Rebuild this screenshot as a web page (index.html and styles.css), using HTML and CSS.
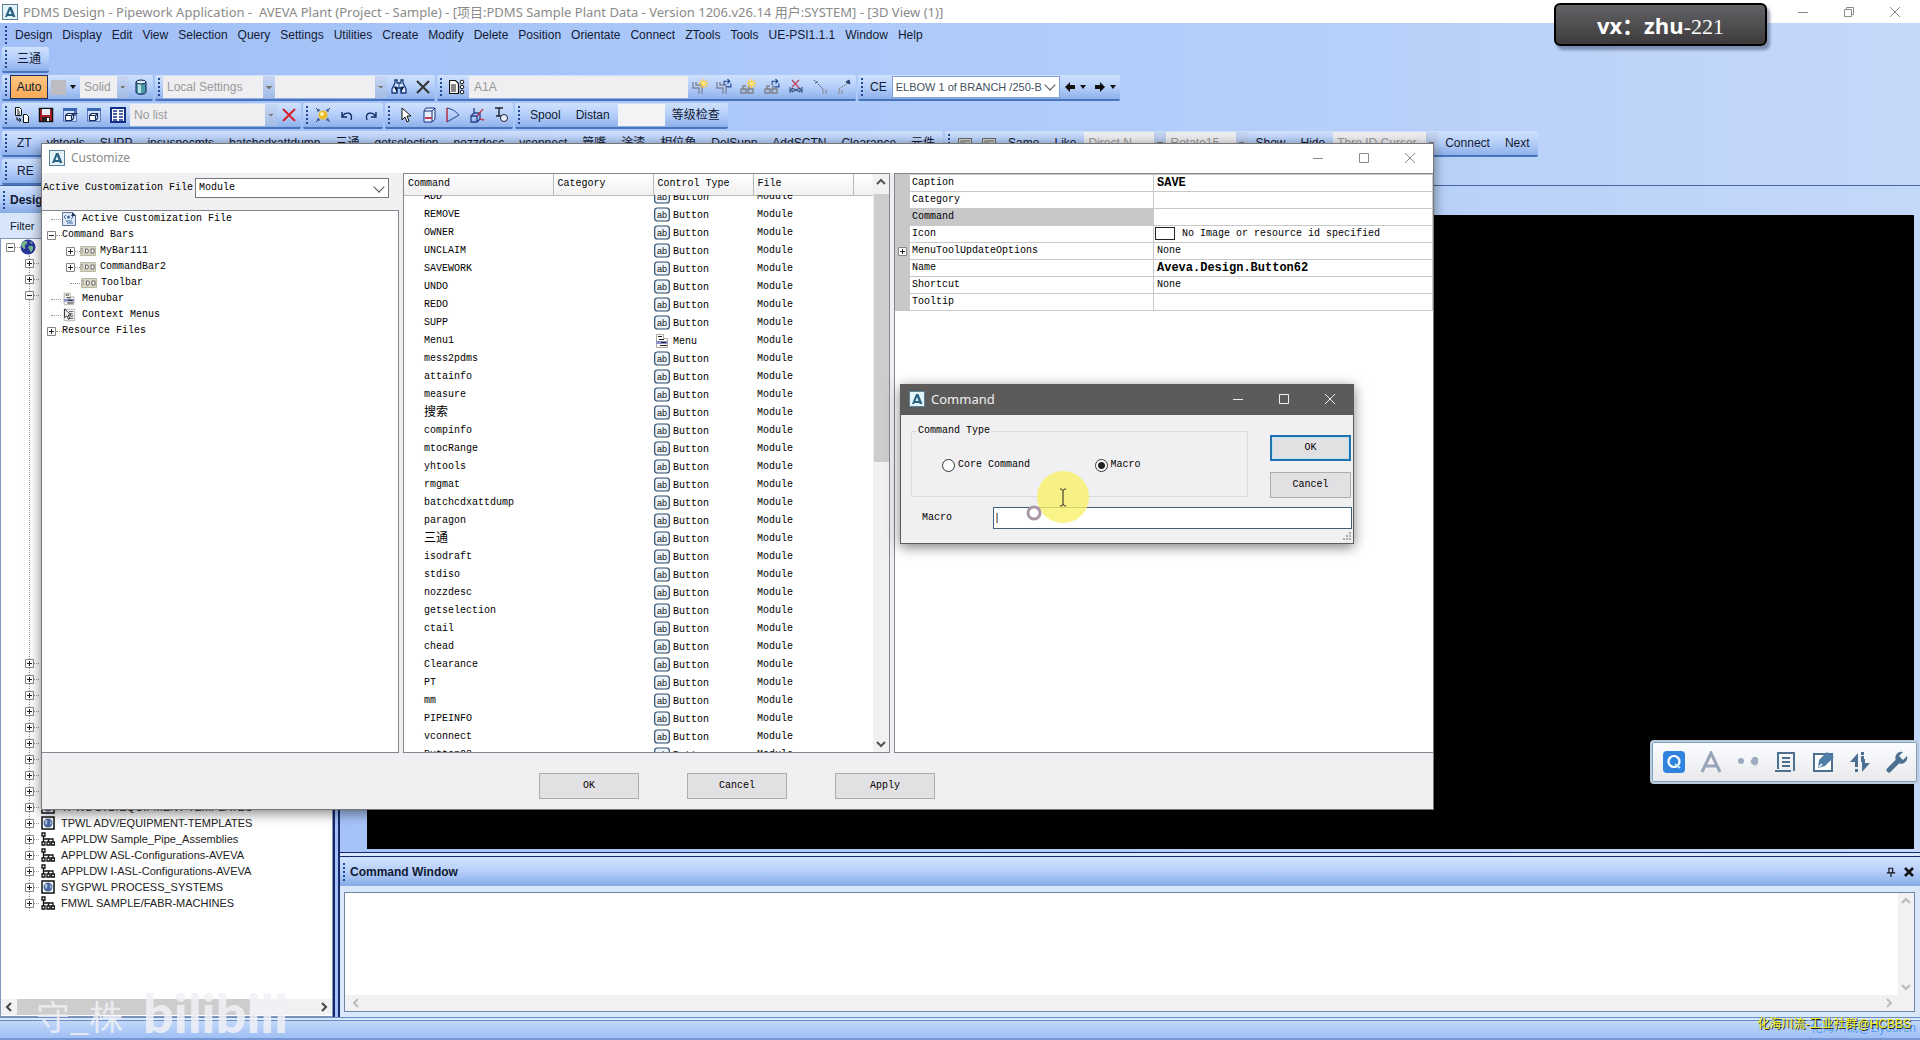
FILE: index.html
```html
<!DOCTYPE html>
<html lang="zh-CN">
<head>
<meta charset="utf-8">
<title>PDMS Design - Pipework Application</title>
<link rel="stylesheet" href="styles.css">
</head>
<body>
<svg class="sprite" aria-hidden="true">
  <symbol id="logo" viewBox="0 0 16 16"><rect x=".5" y=".5" width="15" height="15" fill="#e4f3fa" stroke="#5c8299"/><path d="M3 13 7 3h2.500l4 10h-2.800L8 6l-1.500 4h3l1 2H5.500L5 13z" fill="#2b6480"/></symbol>
  <symbol id="min" viewBox="0 0 12 12"><path d="M1 6.500h10" stroke="currentColor"/></symbol>
  <symbol id="max" viewBox="0 0 12 12"><path d="M1.500 1.500h9v9h-9z" fill="none" stroke="currentColor"/></symbol>
  <symbol id="restore" viewBox="0 0 12 12"><path d="M1.500 3.500h7v7h-7zM3.500 3.500v-2h7v7h-2" fill="none" stroke="currentColor"/></symbol>
  <symbol id="close" viewBox="0 0 12 12"><path d="m1 1 10 10M11 1 1 11" stroke="currentColor"/></symbol>
  <symbol id="plus" viewBox="0 0 9 9"><path d="M.5.5h8v8h-8z" fill="#fff" stroke="#868686"/><path d="M2 4.500h5M4.500 2v5" stroke="#222"/></symbol>
  <symbol id="minus" viewBox="0 0 9 9"><path d="M.5.5h8v8h-8z" fill="#fff" stroke="#868686"/><path d="M2 4.500h5" stroke="#222"/></symbol>
  <symbol id="globe" viewBox="0 0 16 16"><circle cx="8" cy="8" r="7.500" fill="#27359b"/><path d="M3 3c3-2 5-1 4 1S4 6 5 8s-1 3-3 0 0-4 1-5zM9 7c3-1 5 0 4 3s-3 4-3 2-3-3-1-5zM10 2l3 2-2 1z" fill="#78b88a"/></symbol>
  <symbol id="world" viewBox="0 0 14 14"><path d="M1 1h12v12H1z" fill="#fff" stroke="#111" stroke-width="1.500"/><circle cx="7" cy="7" r="4.500" fill="#4a679e"/><path d="M4 4c3-1 3 2 2 4S3 7 4 4zM9 4l2 3-2 2z" fill="#9fb9d9"/></symbol>
  <symbol id="hier" viewBox="0 0 14 14"><path d="M1 1h3v3H1zM1 10h3v3H1zM6 10h3v3H6zM10.500 10h3v3h-3zM2.500 4v6M2.500 7h9.500v3M7.500 7v3" fill="none" stroke="#111" stroke-width="1.300"/></symbol>
  <symbol id="ab" viewBox="0 0 16 16"><rect x=".7" y="1" width="14.600" height="13" rx="2.500" fill="#eef4f9" stroke="#2d4a68" stroke-width="1.200"/><text x="8" y="11" text-anchor="middle" class="ab-text">ab</text></symbol>
  <symbol id="menu" viewBox="0 0 14 16"><path d="M1.500 1.500h7v4h4v9h-11z" fill="#fff" stroke="#b2a89a"/><path d="M1 8h12v3H1z" fill="#8c93c4"/><path d="M3 3.500h4M4 6.500h5M6 9.500h5M5 12.500h7" stroke="#222" stroke-width="1.200"/></symbol>
  <symbol id="ctx" viewBox="0 0 14 16"><path d="M1.500 1.500h12v13h-12z" fill="#fff" stroke="#aaa"/><path d="M7 4h5M7 6h4M8 8h4M8 10h4M7 12h5" stroke="#555"/><path d="M2 1v10l2.500-2 2 4 1.500-1-2-4h3z" fill="#fff" stroke="#111"/></symbol>
  <symbol id="bar" viewBox="0 0 16 10"><path d="M.5.500h15v9H.5z" fill="#d9d6c6" stroke="#bab6a2"/><path d="M5.500 3v4h2l1-2-1-2zM11 3h3v4h-3z" fill="#fff" stroke="#666"/><path d="M2 2v6" stroke="#666" stroke-dasharray="1 1"/></symbol>
  <symbol id="file" viewBox="0 0 14 14"><path d="M.5.500h10l3 3v10H.5z" fill="#dfe9f7" stroke="#5d7399"/><path d="m4 3-2 2 2 2m5-4 2 2-2 2M4 9h6M5 11h6" stroke="#41669f" fill="none"/><circle cx="6.500" cy="5" r="1.500" fill="#41669f"/><path d="M10 0v4h4z" fill="#27365c"/></symbol>
  <symbol id="cyl" viewBox="0 0 16 16"><path d="M3 3v10c0 3 10 3 10 0V3" fill="#4a9aa6" stroke="#0c1a50"/><path d="M5 5v9h3V5z" fill="#b4e4e6"/><ellipse cx="8" cy="3" rx="5" ry="2" fill="#d8f0f0" stroke="#0c1a50"/></symbol>
  <symbol id="bino" viewBox="0 0 16 16"><path d="M4 1h2v3h4V1h2v3l3 6v4h-5V9H6v5H1v-4l3-6z" fill="#dce8ff" stroke="#173a7d" stroke-width="1.300"/><path d="M3 8h3v5M13 8h-3v5M8 4v5" stroke="#173a7d"/></symbol>
  <symbol id="x" viewBox="0 0 16 16"><path d="m2 2 12 12M14 2 2 14" stroke="currentColor" stroke-width="2"/></symbol>
  <symbol id="xbold" viewBox="0 0 10 10"><path d="m1 1 8 8M9 1 1 9" stroke="currentColor" stroke-width="2.500"/></symbol>
  <symbol id="spec" viewBox="0 0 16 16"><path d="M.5 1.500h6l3 3v10h-9z" fill="#fff" stroke="#111" stroke-width="1.200"/><path d="M2 6h5M2 8h5M2 10h5M2 12h5" stroke="#111"/><circle cx="13" cy="3" r="1.800" fill="#fff" stroke="#111"/><circle cx="13" cy="8" r="1.800" fill="#fff" stroke="#111"/><circle cx="13" cy="13" r="1.800" fill="#fff" stroke="#111"/></symbol>
  <symbol id="star" viewBox="0 0 8 8"><path d="M4 0v8M0 4h8M1 1l6 6M7 1 1 7" stroke="#ffcf3f" stroke-width="1.200"/><circle cx="4" cy="4" r="1.500" fill="#ffe98b"/></symbol>
  <symbol id="cyc" viewBox="0 0 8 8"><path d="M1 5V2h5M4 0l2 2-2 2M7 4v3H3" fill="none" stroke="#23458d"/></symbol>
  <symbol id="pipe" viewBox="0 0 16 16"><path d="M1 3v6h6v6M4 3v3h6v9" fill="none" stroke="#7f8597" stroke-width="1.300"/></symbol>
  <symbol id="pipe-new" viewBox="0 0 16 16"><use href="#pipe"/><use href="#star" x="7" width="9" height="9"/></symbol>
  <symbol id="pipe-mod" viewBox="0 0 16 16"><use href="#pipe"/><use href="#cyc" x="7" width="9" height="9"/></symbol>
  <symbol id="comp" viewBox="0 0 16 16"><path d="M1 10h5v4H1zM8 10h5v4H8zM3 10V7h3M9 10V6" fill="none" stroke="#7f8086" stroke-width="1.400"/></symbol>
  <symbol id="comp-new" viewBox="0 0 16 16"><use href="#comp"/><use href="#star" x="7" width="9" height="9"/></symbol>
  <symbol id="comp-mod" viewBox="0 0 16 16"><use href="#comp"/><use href="#cyc" x="7" width="9" height="9"/></symbol>
  <symbol id="comp-del" viewBox="0 0 16 16"><path d="M2 8v6M14 8v6M2 11h2M12 11h2M4 9v4l8-4v4z" fill="none" stroke="#24406f"/><path d="m4 1 7 8M11 1 4 8" stroke="#c24357" stroke-width="1.300"/></symbol>
  <symbol id="conn" viewBox="0 0 16 16"><path d="M2 1l3 3M5 2v2H3M6 5l5 5" stroke="#3c5684" fill="none" stroke-dasharray="2 1"/><path d="M11 10v5M14 10v5" stroke="#888"/></symbol>
  <symbol id="node" viewBox="0 0 16 16"><path d="m12 4-9 6" stroke="#777" stroke-dasharray="2 1"/><path d="M10 3l3-2 1 4z" fill="#24406f" stroke="#24406f"/><path d="M3 10v5M6 11v4" stroke="#888"/></symbol>
  <symbol id="left" viewBox="0 0 12 12"><path d="M1 6l5-5v3h5v4H6v3z" fill="#111"/></symbol>
  <symbol id="right" viewBox="0 0 12 12"><path d="m11 6-5-5v3H1v4h5v3z" fill="#111"/></symbol>
  <symbol id="docs" viewBox="0 0 16 16"><path d="M1.500.500h4l2 2v6h-6zM9.500 7.500h3l2 2v6h-5z" fill="#fff" stroke="#111"/><path d="M3 3h2M3 5h3M3 7h3M3 10v3h4M5 11l2 2-2 2" stroke="#111" fill="none"/></symbol>
  <symbol id="save" viewBox="0 0 16 16"><path d="M1.500 1.500h13v13h-13z" fill="#b31f2b" stroke="#111" stroke-width="1.500"/><path d="M4 2h8v6H4z" fill="#e9eef5"/><path d="M4 10h8v5H4z" fill="#222"/><path d="M9 11h2v3H9z" fill="#fff"/></symbol>
  <symbol id="win" viewBox="0 0 16 16"><path d="M1.500 1.500h13v13h-13z" fill="#cfe0fb" stroke="#5b7cc0"/><path d="M1 1h14v3H1z" fill="#3b66b4"/><path d="M3.500 8.500h6v5h-6zl2-2h6v5l-2 2M9.500 8.500l2-2" fill="#fff" stroke="#182c60" stroke-width="1.200"/></symbol>
  <symbol id="win-add" viewBox="0 0 16 16"><use href="#win"/><path d="M13 4v5M10.500 6.500h5" stroke="#182c60" stroke-width="1.200"/></symbol>
  <symbol id="list" viewBox="0 0 16 16"><path d="M1 1h14v14H1z" fill="#fff" stroke="#142f88" stroke-width="2"/><path d="M3 4h4M3 7h4M3 10h4M3 13h4M9 4h4M9 7h4M9 10h4M9 13h4" stroke="#142f88" stroke-width="1.600"/></symbol>
  <symbol id="sun" viewBox="0 0 16 16"><circle cx="8" cy="8" r="4.500" fill="#e8b92c"/><circle cx="7" cy="7" r="2" fill="#fff2a0"/><path d="m1 1 3 3m0-2v2H2M15 1l-3 3m0-2v2h2M1 15l3-3m0 2v-2H2M15 15l-3-3m0 2v-2h2" stroke="#24406f" fill="none"/></symbol>
  <symbol id="undo" viewBox="0 0 16 16"><path d="M3 5v5h5M3 10c3-6 12-5 9 3" stroke="#122d66" fill="none" stroke-width="1.400"/></symbol>
  <symbol id="redo" viewBox="0 0 16 16"><path d="M13 5v5H8M13 10C10 4 1 5 4 13" stroke="#122d66" fill="none" stroke-width="1.400"/></symbol>
  <symbol id="arrow" viewBox="0 0 16 16"><path d="M5 1v12l3-3 2 5 2-1-2-5h4z" fill="#fff" stroke="#111"/></symbol>
  <symbol id="box" viewBox="0 0 16 16"><path d="M3 4l2-3h9v11l-3 3H3zM3 4h8v11M11 4l3-3" fill="#e6efff" stroke="#14317f"/><path d="M4 10h7v2H4z" fill="#c43d50"/></symbol>
  <symbol id="tri" viewBox="0 0 16 16"><path d="M2 1v14" stroke="#b62e42" stroke-width="1.500"/><path d="M2 1c6 1 9 4 12 7-4 2-8 5-12 7" fill="none" stroke="#23418c"/></symbol>
  <symbol id="axes" viewBox="0 0 16 16"><path d="M2 9h6v6H2zl3-3h6v6l-3 3M8 9l3-3M5 6V1" fill="none" stroke="#23418c" stroke-width="1.300"/><path d="M8 9l6-7M11 12l4 1" stroke="#c43d50" stroke-width="1.300"/></symbol>
  <symbol id="dim" viewBox="0 0 16 16"><path d="M2 1h8M6 1v8M3 9h5" stroke="#223" stroke-width="1.400"/><circle cx="11" cy="11" r="3.500" fill="#e7f2ff" stroke="#223"/></symbol>
  <symbol id="card" viewBox="0 0 16 16"><path d="M1.500 3.500h13v9h-13z" fill="#d3d3cb" stroke="#65686d"/><path d="M3 6h10M3 8h6" stroke="#65686d"/></symbol>
  <symbol id="up" viewBox="0 0 10 10"><path d="m1 7 4-4 4 4" fill="none" stroke="currentColor" stroke-width="2"/></symbol>
  <symbol id="down" viewBox="0 0 10 10"><path d="m1 3 4 4 4-4" fill="none" stroke="currentColor" stroke-width="2"/></symbol>
  <symbol id="prev" viewBox="0 0 10 10"><path d="M7 1 3 5l4 4" fill="none" stroke="currentColor" stroke-width="2"/></symbol>
  <symbol id="next" viewBox="0 0 10 10"><path d="m3 1 4 4-4 4" fill="none" stroke="currentColor" stroke-width="2"/></symbol>
  <symbol id="pin" viewBox="0 0 12 12"><path d="M3.500 1v6M3 1.500h5M8 1v6M1 7h10M6 7v5" stroke="#111" stroke-width="1.400"/></symbol>
</svg>

<div class="app">
  <header class="titlebar">
    <svg class="i16"><use href="#logo"/></svg>
    <span class="title">PDMS Design - Pipework Application -&nbsp; AVEVA Plant (Project - Sample) - [项目:PDMS Sample Plant Data - Version 1206.v26.14 用户:SYSTEM] - [3D View (1)]</span>
    <div class="wincontrols"><button aria-label="Minimize"><svg><use href="#min"/></svg></button><button aria-label="Restore"><svg><use href="#restore"/></svg></button><button aria-label="Close"><svg><use href="#close"/></svg></button></div>
  </header>

  <nav class="menubar"><i class="grip"></i><button>Design</button><button>Display</button><button>Edit</button><button>View</button><button>Selection</button><button>Query</button><button>Settings</button><button>Utilities</button><button>Create</button><button>Modify</button><button>Delete</button><button>Position</button><button>Orientate</button><button>Connect</button><button>ZTools</button><button>Tools</button><button>UE-PSI1.1.1</button><button>Window</button><button>Help</button></nav>

  <div class="toolbars">
    <div class="row"><div class="bar"><i class="grip"></i><button>三通</button></div></div>
    <div class="row">
      <div class="bar"><i class="grip"></i><button class="auto">Auto</button><span class="swatch"></span><i class="caret"></i>
        <span class="combo w-solid"><select disabled aria-label="Fill"><option>Solid</option></select></span><button class="ib" aria-label="Cylinder"><svg><use href="#cyl"/></svg></button></div>
      <div class="bar"><i class="grip"></i><span class="combo w-local"><select disabled aria-label="Settings"><option>Local Settings</option></select></span><span class="combo w-local"><select disabled aria-label="Value"><option></option></select></span><button class="ib" aria-label="Find"><svg><use href="#bino"/></svg></button><button class="ib dark" aria-label="Clear"><svg><use href="#x"/></svg></button></div>
      <div class="bar"><i class="grip"></i><button class="ib" aria-label="Specification"><svg><use href="#spec"/></svg></button><input class="spec" disabled value="A1A" aria-label="Specification name"><button class="ib" aria-label="New pipe"><svg><use href="#pipe-new"/></svg></button><button class="ib" aria-label="Modify pipe"><svg><use href="#pipe-mod"/></svg></button><button class="ib" aria-label="New component"><svg><use href="#comp-new"/></svg></button><button class="ib" aria-label="Modify component"><svg><use href="#comp-mod"/></svg></button><button class="ib" aria-label="Delete component"><svg><use href="#comp-del"/></svg></button><button class="ib" aria-label="Connect"><svg><use href="#conn"/></svg></button><button class="ib" aria-label="Reconnect"><svg><use href="#node"/></svg></button></div>
      <div class="bar"><i class="grip"></i><label for="ce" class="ce">CE</label><span class="combo open w-ce"><select id="ce"><option>ELBOW 1 of BRANCH /250-B</option></select></span><button class="nav" aria-label="Back"><svg><use href="#left"/></svg></button><i class="caret"></i><button class="nav" aria-label="Forward"><svg><use href="#right"/></svg></button><i class="caret"></i></div>
    </div>
    <div class="row">
      <div class="bar"><i class="grip"></i><button class="ib" aria-label="Copy"><svg><use href="#docs"/></svg></button><button class="ib" aria-label="Save"><svg><use href="#save"/></svg></button><button class="ib" aria-label="Add view"><svg><use href="#win-add"/></svg></button><button class="ib" aria-label="Remove view"><svg><use href="#win"/></svg></button><button class="ib" aria-label="List"><svg><use href="#list"/></svg></button><span class="combo w-list"><select disabled aria-label="List name"><option>No list</option></select></span><button class="ib red" aria-label="Delete list"><svg><use href="#x"/></svg></button></div>
      <div class="bar"><i class="grip"></i><button class="ib" aria-label="Focus"><svg><use href="#sun"/></svg></button><button class="ib" aria-label="Undo"><svg><use href="#undo"/></svg></button><button class="ib" aria-label="Redo"><svg><use href="#redo"/></svg></button></div>
      <div class="bar"><i class="grip"></i><button class="ib" aria-label="Select"><svg><use href="#arrow"/></svg></button><button class="ib" aria-label="Box"><svg><use href="#box"/></svg></button><button class="ib" aria-label="Slope"><svg><use href="#tri"/></svg></button><button class="ib" aria-label="Axes"><svg><use href="#axes"/></svg></button><button class="ib" aria-label="Dimension"><svg><use href="#dim"/></svg></button></div>
      <div class="bar"><i class="grip"></i><button>Spool</button><button>Distan</button><input class="dist" aria-label="Distance"><button>等级检查</button></div>
    </div>
    <div class="row">
      <div class="bar"><i class="grip"></i><button>ZT</button><button>yhtools</button><button>SUPP</button><button>insuspecmts</button><button>batchcdxattdump</button><button>三通</button><button>getselection</button><button>nozzdesc</button><button>vconnect</button><button>管嘴</button><button>涂漆</button><button>相位角</button><button>DelSupp</button><button>AddSCTN</button><button>Clearance</button><button>元件</button></div>
      <div class="bar"><i class="grip"></i><button class="ib" aria-label="Card one"><svg><use href="#card"/></svg></button><button class="ib" aria-label="Card two"><svg><use href="#card"/></svg></button><button>Same</button><button>Like</button><span class="combo w-dir"><select disabled aria-label="Direction"><option>Direct N</option></select></span><span class="combo w-dir"><select disabled aria-label="Rotation"><option>Rotate15</option></select></span><button>Show</button><button>Hide</button><span class="combo w-thro"><select disabled aria-label="Through"><option>Thro ID Cursor</option></select></span><button>Connect</button><button>Next</button></div>
    </div>
    <div class="row"><div class="bar"><i class="grip"></i><button>RE</button></div></div>
  </div>

  <main class="work">
    <aside class="explorer">
      <h2 class="panelhead"><i class="grip"></i>Design Explorer</h2>
      <div class="filter">Filter</div>
      <div class="treebox">
        <div class="root"><svg class="i9"><use href="#minus"/></svg><i class="dash"></i><svg class="i16"><use href="#globe"/></svg></div>
        <ul class="dtree">
          <li><svg class="i9"><use href="#plus"/></svg><i class="dash"></i></li>
          <li><svg class="i9"><use href="#plus"/></svg><i class="dash"></i></li>
          <li class="opened"><svg class="i9"><use href="#minus"/></svg><i class="dash"></i></li>
          <li><svg class="i9"><use href="#plus"/></svg><i class="dash"></i></li>
          <li><svg class="i9"><use href="#plus"/></svg><i class="dash"></i></li>
          <li><svg class="i9"><use href="#plus"/></svg><i class="dash"></i></li>
          <li><svg class="i9"><use href="#plus"/></svg><i class="dash"></i></li>
          <li><svg class="i9"><use href="#plus"/></svg><i class="dash"></i></li>
          <li><svg class="i9"><use href="#plus"/></svg><i class="dash"></i></li>
          <li><svg class="i9"><use href="#plus"/></svg><i class="dash"></i></li>
          <li><svg class="i9"><use href="#plus"/></svg><i class="dash"></i></li>
          <li><svg class="i9"><use href="#plus"/></svg><i class="dash"></i></li>
          <li><svg class="i9"><use href="#plus"/></svg><i class="dash"></i><svg class="i14"><use href="#world"/></svg>TPWL STD/EQUIPMENT-TEMPLATES</li>
          <li><svg class="i9"><use href="#plus"/></svg><i class="dash"></i><svg class="i14"><use href="#world"/></svg>TPWL ADV/EQUIPMENT-TEMPLATES</li>
          <li><svg class="i9"><use href="#plus"/></svg><i class="dash"></i><svg class="i14"><use href="#hier"/></svg>APPLDW Sample_Pipe_Assemblies</li>
          <li><svg class="i9"><use href="#plus"/></svg><i class="dash"></i><svg class="i14"><use href="#hier"/></svg>APPLDW ASL-Configurations-AVEVA</li>
          <li><svg class="i9"><use href="#plus"/></svg><i class="dash"></i><svg class="i14"><use href="#hier"/></svg>APPLDW I-ASL-Configurations-AVEVA</li>
          <li><svg class="i9"><use href="#plus"/></svg><i class="dash"></i><svg class="i14"><use href="#world"/></svg>SYGPWL PROCESS_SYSTEMS</li>
          <li><svg class="i9"><use href="#plus"/></svg><i class="dash"></i><svg class="i14"><use href="#hier"/></svg>FMWL SAMPLE/FABR-MACHINES</li>
        </ul>
        <div class="hscroll"><svg><use href="#prev"/></svg><i class="track"><i class="thumb"></i></i><svg><use href="#next"/></svg></div>
      </div>
    </aside>
    <section class="views">
      <div class="view3d"><div class="canvas"></div></div>
      <section class="cmdwin">
        <h2 class="panelhead"><i class="grip"></i>Command Window<span class="tools"><svg><use href="#pin"/></svg><svg><use href="#xbold"/></svg></span></h2>
        <div class="console">
          <div class="consolerow"><div class="output"></div><div class="vscroll dim"><svg><use href="#up"/></svg><svg><use href="#down"/></svg></div></div>
          <div class="hscroll dim"><svg><use href="#prev"/></svg><i class="track"></i><svg><use href="#next"/></svg></div>
        </div>
      </section>
    </section>
  </main>
  <footer class="status"></footer>
</div>

<section class="window customize" aria-label="Customize">
  <header class="wtitle"><svg class="i16"><use href="#logo"/></svg><span>Customize</span>
    <div class="wincontrols"><button aria-label="Minimize"><svg><use href="#min"/></svg></button><button aria-label="Maximize"><svg><use href="#max"/></svg></button><button aria-label="Close"><svg><use href="#close"/></svg></button></div></header>
  <div class="panes">
    <div class="leftpane">
      <div class="filerow"><label for="acf">Active Customization File</label><span class="combo open flat"><select id="acf"><option>Module</option></select></span></div>
      <div class="ctree">
        <ul>
          <li class="leaf"><i class="dash"></i><svg class="i14"><use href="#file"/></svg>Active Customization File</li>
          <li><svg class="i9"><use href="#minus"/></svg><i class="dash short"></i>Command Bars
            <ul>
              <li><svg class="i9"><use href="#plus"/></svg><i class="dash"></i><svg class="ibar"><use href="#bar"/></svg>MyBar111</li>
              <li><svg class="i9"><use href="#plus"/></svg><i class="dash"></i><svg class="ibar"><use href="#bar"/></svg>CommandBar2</li>
              <li class="leaf"><i class="dash"></i><svg class="ibar"><use href="#bar"/></svg>Toolbar</li>
            </ul></li>
          <li class="leaf"><i class="dash"></i><svg class="i14"><use href="#menu"/></svg>Menubar</li>
          <li class="leaf"><i class="dash"></i><svg class="i14"><use href="#ctx"/></svg>Context Menus</li>
          <li><svg class="i9"><use href="#plus"/></svg><i class="dash short"></i>Resource Files</li>
        </ul>
      </div>
    </div>
    <div class="cmdlist">
      <div class="viewport">
      <table>
        <colgroup><col class="c1"><col class="c2"><col class="c2"><col class="c2"><col></colgroup>
        <thead><tr><th>Command</th><th>Category</th><th>Control Type</th><th>File</th><th></th></tr></thead>
        <tbody>
          <tr><td>ADD</td><td></td><td><svg><use href="#ab"/></svg>Button</td><td>Module</td><td></td></tr>
          <tr><td>REMOVE</td><td></td><td><svg><use href="#ab"/></svg>Button</td><td>Module</td><td></td></tr>
          <tr><td>OWNER</td><td></td><td><svg><use href="#ab"/></svg>Button</td><td>Module</td><td></td></tr>
          <tr><td>UNCLAIM</td><td></td><td><svg><use href="#ab"/></svg>Button</td><td>Module</td><td></td></tr>
          <tr><td>SAVEWORK</td><td></td><td><svg><use href="#ab"/></svg>Button</td><td>Module</td><td></td></tr>
          <tr><td>UNDO</td><td></td><td><svg><use href="#ab"/></svg>Button</td><td>Module</td><td></td></tr>
          <tr><td>REDO</td><td></td><td><svg><use href="#ab"/></svg>Button</td><td>Module</td><td></td></tr>
          <tr><td>SUPP</td><td></td><td><svg><use href="#ab"/></svg>Button</td><td>Module</td><td></td></tr>
          <tr><td>Menu1</td><td></td><td><svg><use href="#menu"/></svg>Menu</td><td>Module</td><td></td></tr>
          <tr><td>mess2pdms</td><td></td><td><svg><use href="#ab"/></svg>Button</td><td>Module</td><td></td></tr>
          <tr><td>attainfo</td><td></td><td><svg><use href="#ab"/></svg>Button</td><td>Module</td><td></td></tr>
          <tr><td>measure</td><td></td><td><svg><use href="#ab"/></svg>Button</td><td>Module</td><td></td></tr>
          <tr><td class="zh">搜索</td><td></td><td><svg><use href="#ab"/></svg>Button</td><td>Module</td><td></td></tr>
          <tr><td>compinfo</td><td></td><td><svg><use href="#ab"/></svg>Button</td><td>Module</td><td></td></tr>
          <tr><td>mtocRange</td><td></td><td><svg><use href="#ab"/></svg>Button</td><td>Module</td><td></td></tr>
          <tr><td>yhtools</td><td></td><td><svg><use href="#ab"/></svg>Button</td><td>Module</td><td></td></tr>
          <tr><td>rmgmat</td><td></td><td><svg><use href="#ab"/></svg>Button</td><td>Module</td><td></td></tr>
          <tr><td>batchcdxattdump</td><td></td><td><svg><use href="#ab"/></svg>Button</td><td>Module</td><td></td></tr>
          <tr><td>paragon</td><td></td><td><svg><use href="#ab"/></svg>Button</td><td>Module</td><td></td></tr>
          <tr><td class="zh">三通</td><td></td><td><svg><use href="#ab"/></svg>Button</td><td>Module</td><td></td></tr>
          <tr><td>isodraft</td><td></td><td><svg><use href="#ab"/></svg>Button</td><td>Module</td><td></td></tr>
          <tr><td>stdiso</td><td></td><td><svg><use href="#ab"/></svg>Button</td><td>Module</td><td></td></tr>
          <tr><td>nozzdesc</td><td></td><td><svg><use href="#ab"/></svg>Button</td><td>Module</td><td></td></tr>
          <tr><td>getselection</td><td></td><td><svg><use href="#ab"/></svg>Button</td><td>Module</td><td></td></tr>
          <tr><td>ctail</td><td></td><td><svg><use href="#ab"/></svg>Button</td><td>Module</td><td></td></tr>
          <tr><td>chead</td><td></td><td><svg><use href="#ab"/></svg>Button</td><td>Module</td><td></td></tr>
          <tr><td>Clearance</td><td></td><td><svg><use href="#ab"/></svg>Button</td><td>Module</td><td></td></tr>
          <tr><td>PT</td><td></td><td><svg><use href="#ab"/></svg>Button</td><td>Module</td><td></td></tr>
          <tr><td>mm</td><td></td><td><svg><use href="#ab"/></svg>Button</td><td>Module</td><td></td></tr>
          <tr><td>PIPEINFO</td><td></td><td><svg><use href="#ab"/></svg>Button</td><td>Module</td><td></td></tr>
          <tr><td>vconnect</td><td></td><td><svg><use href="#ab"/></svg>Button</td><td>Module</td><td></td></tr>
          <tr><td>Button28</td><td></td><td><svg><use href="#ab"/></svg>Button</td><td>Module</td><td></td></tr>
        </tbody>
      </table>
      </div>
      <div class="vscroll"><svg><use href="#up"/></svg><i class="vthumb"></i><svg><use href="#down"/></svg></div>
    </div>
    <div class="props">
      <table>
        <tr><td class="gut"></td><th>Caption</th><td class="strong">SAVE</td></tr>
        <tr><td class="gut"></td><th>Category</th><td></td></tr>
        <tr class="sel"><td class="gut"></td><th>Command</th><td></td></tr>
        <tr><td class="gut"></td><th>Icon</th><td class="iconcell"><i class="noimg"></i>No Image or resource id specified</td></tr>
        <tr><td class="gut"><svg class="i9"><use href="#plus"/></svg></td><th>MenuToolUpdateOptions</th><td>None</td></tr>
        <tr><td class="gut"></td><th>Name</th><td class="strong">Aveva.Design.Button62</td></tr>
        <tr><td class="gut"></td><th>Shortcut</th><td>None</td></tr>
        <tr><td class="gut"></td><th>Tooltip</th><td></td></tr>
      </table>
    </div>
  </div>
  <footer class="actions"><button class="push">OK</button><button class="push">Cancel</button><button class="push">Apply</button></footer>
</section>

<section class="window command" aria-label="Command">
  <header class="wtitle"><svg class="i16"><use href="#logo"/></svg><span>Command</span>
    <div class="wincontrols"><button aria-label="Minimize"><svg><use href="#min"/></svg></button><button aria-label="Maximize"><svg><use href="#max"/></svg></button><button aria-label="Close"><svg><use href="#close"/></svg></button></div></header>
  <div class="cbody">
    <fieldset><legend>Command Type</legend>
      <label><input type="radio" name="kind">Core Command</label>
      <label><input type="radio" name="kind" checked>Macro</label>
    </fieldset>
    <div class="cbuttons"><button class="push default">OK</button><button class="push">Cancel</button></div>
  </div>
  <div class="macro"><label for="macro">Macro</label><input id="macro" value="|"></div>
  <svg class="size" viewBox="0 0 10 10"><path d="M7 1h2M4 4h2M7 4h2M1 7h2M4 7h2M7 7h2" stroke="#aaa" stroke-width="2"/></svg>
</section>

<svg class="pointer" viewBox="0 0 80 60" aria-hidden="true"><circle cx="53" cy="27" r="26" fill="#f9f06a" fill-opacity=".8"/><path d="M50 19c2 0 3 1 3 2 0-1 1-2 3-2M53 21v13M50 36c2 0 3-1 3-2 0 1 1 2 3 2" fill="none" stroke="#222"/><circle cx="24" cy="43" r="6" fill="#fff" stroke="#ab98a6" stroke-width="3"/></svg>

<div class="badge"><b>vx：zhu</b>-221</div>

<div class="ime">
  <svg viewBox="0 0 22 22"><rect width="22" height="22" rx="4" fill="#2f83dc"/><circle cx="11" cy="10.500" r="5.500" fill="none" stroke="#fff" stroke-width="2.200"/><path d="m12 13 5 4" stroke="#bfe9ff" stroke-width="2"/></svg>
  <svg viewBox="0 0 22 22"><path d="M2 21 11 2l9 19M5.500 15h11" fill="none" stroke="#98a5b8" stroke-width="3"/></svg>
  <svg viewBox="0 0 22 22"><circle cx="4" cy="10" r="3" fill="#9aabc0"/><path d="M15 8a3 3 0 1 1 6 2c0 3-1 4-4 6 1-2 2-2 2-3a3 3 0 0 1-4-5z" fill="#9aabc0"/></svg>
  <svg viewBox="0 0 22 22"><path d="M4 18V2h16v18M1 20h16M8 7h8M8 11h8M8 15h8" fill="none" stroke="#4d7090" stroke-width="2"/></svg>
  <svg viewBox="0 0 22 22"><path d="M2 3h18v17H2z" fill="#fff" stroke="#4d7090" stroke-width="2"/><path d="M6 17l1-8 8-8 7 5-9 9z" fill="#4f7fa6"/><path d="M7 16l3-3" stroke="#fff" stroke-width="1.500"/></svg>
  <svg viewBox="0 0 22 22"><path d="M1 11 9 2v14H6v-5zM21 12l-8 9V8h3v4z" fill="#4d7090"/><path d="M7.500 18v3M13.500 1v3M13.500 5v6" stroke="#4d7090" stroke-width="3"/></svg>
  <svg viewBox="0 0 22 22"><path d="M3 19 13 9" stroke="#4d7090" stroke-width="5" stroke-linecap="round"/><path d="M17 1a6 6 0 1 0 4 4l-4 4-4-4z" fill="#4d7090"/></svg>
</div>

<div class="mark"><span class="author">守_株</span><span class="site">bilibili</span></div>
<div class="credit-back">化海川流@ziyouren</div>
<div class="credit">化海川流-工业社群@HCBBS</div>
</body>
</html>
```
FILE: styles.css
```css
* { box-sizing: border-box; }
body { margin: 0; overflow: hidden; font: 12px/16px "Liberation Sans", "Noto Sans CJK SC", sans-serif; color: #111a33; }
button, input, select { font: inherit; color: inherit; margin: 0; }
button { border: 0; background: none; padding: 0; }
i { font-style: normal; }
ul { list-style: none; margin: 0; padding: 0; }
svg { flex: none; }
.sprite { position: absolute; width: 0; height: 0; }
.ab-text { font: 9px "Liberation Sans", sans-serif; fill: #111; }
.i16 { width: 16px; height: 16px; }
.i14 { width: 14px; height: 14px; }
.i9 { width: 9px; height: 9px; }
.ibar { width: 16px; height: 10px; }

.app { height: 100vh; display: flex; flex-direction: column; background: linear-gradient(90deg, #a2bff7, #aecbfa 50%, #c4d8f9); }
.titlebar { display: flex; align-items: center; height: 23px; background: #fff; color: #8a8a8a; padding-left: 2px; gap: 5px; font: 13px/16px "Noto Sans", "Noto Sans CJK SC", sans-serif; }
.wincontrols { display: flex; margin-left: auto; }
.wincontrols button { width: 46px; height: 20px; display: grid; place-items: center; }
.titlebar .wincontrols { padding-right: 2px; }
.wincontrols svg { width: 12px; height: 12px; }

.grip { width: 2px; height: 18px; margin: 0 3px; flex: none; background: repeating-linear-gradient(#234a94 0 2px, transparent 2px 4px); }
.menubar { display: flex; align-items: center; height: 24px; padding-left: 2px; }
.menubar button { padding: 0 5px; }
.toolbars { display: flex; flex-direction: column; gap: 2px; }
.row { display: flex; gap: 2px; padding-left: 2px; height: 26px; }
.bar { display: flex; align-items: center; border-bottom: 2px solid #4774bd; background: linear-gradient(#cfe1fc, #b5cefa 50%, #8eb0ea); border-radius: 2px; }
.bar button { padding: 0 8px 0 7px; white-space: nowrap; }
.bar .ib { width: 24px; height: 24px; padding: 4px; }
.ib svg { width: 16px; height: 16px; display: block; }
.ib.dark { color: #333; }
.ib.red { color: #d6202b; }
.bar .auto { width: 38px; height: 24px; padding: 0; border: 1px solid #1b2d66; background: linear-gradient(#ffc580, #fbab57); margin-right: 3px; }
.swatch { width: 15px; height: 15px; background: #bdbdc1; }
.caret { margin: 0 4px; border: 3px solid transparent; border-top: 4px solid #111; border-bottom: 0; }
.combo { position: relative; display: flex; height: 22px; }
.combo select { appearance: none; width: 100%; height: 100%; border: 0; border-radius: 0; background: #efeff2; padding: 0 4px; color: #999; opacity: 1; }
.combo::after { content: ""; position: absolute; right: 0; top: 0; width: 12px; height: 100%; background: linear-gradient(45deg, transparent 50%, #777 50%) 3px 10px/3px 3px no-repeat, linear-gradient(315deg, transparent 50%, #777 50%) 6px 10px/3px 3px no-repeat, linear-gradient(#c7d7f3, #a3bbe6); pointer-events: none; }
.combo.open select { background: #fff; border: 1px solid #7fa0d4; color: #444f63; padding: 0 3px; }
.combo.open::after { right: 6px; top: 5px; width: 7px; height: 7px; background: none; border: solid #555; border-width: 0 1px 1px 0; transform: rotate(45deg); }
.w-solid { width: 49px; }
.w-local { width: 112px; }
.w-list { width: 147px; }
.w-ce { width: 168px; }
.w-ce select { font-size: 11px; }
.w-dir { width: 82px; }
.w-thro { width: 105px; }
.spec { width: 219px; height: 22px; border: 0; background: #efeff2; color: #999; padding: 0 5px; }
.dist { width: 47px; height: 22px; border: 0; background: #f3f3f5; }
.ce { padding: 0 5px 0 4px; }
.bar .nav { padding: 0 0 0 4px; }
.nav svg { width: 12px; height: 12px; display: block; }

.work { flex: 1; display: flex; min-height: 0; border-top: 1px solid #46659c; }
.explorer { width: 335px; display: flex; flex-direction: column; border-right: 2px solid #14286b; }
.panelhead { display: flex; align-items: center; margin: 0; height: 27px; flex: none; font: bold 12px/16px "Liberation Sans", sans-serif; background: linear-gradient(#d3e4fd, #b5cefa 50%, #86abe6); }
.panelhead .grip { margin-right: 5px; }
.filter { height: 25px; padding: 5px 10px; background: #d8e6fb; font-size: 11px; }
.treebox { flex: 1; display: flex; flex-direction: column; background: #fff; border: 1px solid #8296b8; min-height: 0; font-size: 11px; }
.root { display: flex; align-items: center; height: 16px; padding-left: 5px; }
.dash { width: 5px; height: 1px; flex: none; border-top: 1px dotted #999; }
.dtree { margin-left: 28px; border-left: 1px dotted #999; align-self: flex-start; }
.dtree li { display: flex; align-items: center; height: 16px; margin-left: -5px; white-space: nowrap; color: #222; }
.dtree li.opened { margin-bottom: 352px; }
.dtree .i14 { margin: 0 6px 0 2px; }
.hscroll { display: flex; align-items: center; height: 16px; flex: none; background: #f1f0f2; padding: 0 3px; color: #444; margin-top: auto; }
.treebox .hscroll { padding: 0; margin-bottom: 1px; }
.hscroll svg, .vscroll svg { width: 10px; height: 10px; margin: 3px; }
.track { flex: 1; height: 100%; }
.thumb { display: block; width: 78%; height: 100%; background: #cdcdcd; }
.views { flex: 1; display: flex; flex-direction: column; margin-left: 3px; border-left: 2px solid #14286b; min-width: 0; }
.view3d { flex: 1; padding: 29px 6px 3px 27px; }
.canvas { height: 100%; background: #000; }
.cmdwin { height: 165px; display: flex; flex-direction: column; border-top: 1px solid #14286b; padding-top: 3px; background: #d9e7fb; }
.cmdwin .panelhead { height: 30px; border-top: 1px solid #14286b; }
.tools { margin-left: auto; display: flex; gap: 8px; padding-right: 6px; }
.tools svg { width: 10px; height: 10px; color: #111; }
.console { flex: 1; margin: 6px 5px 5px 4px; background: #fff; border: 1px solid #7283a3; display: flex; flex-direction: column; }
.consolerow { flex: 1; display: flex; }
.output { flex: 1; }
.dim { color: #bbb; }
.vscroll { width: 16px; background: #f1f0f2; display: flex; flex-direction: column; justify-content: space-between; }
.hscroll.dim { padding-right: 17px; }
.status { height: 23px; border-top: 1px solid #6c8cc4; box-shadow: inset 0 2px #d9e7fb, inset 0 3px #6c8cc4, inset 0 -2px #7796d4; background: linear-gradient(#c7dcfb, #9bbcf3); }

.window { position: absolute; display: flex; flex-direction: column; background: #f0eff1; border: 1px solid #777; box-shadow: 0 3px 12px rgba(0, 0, 0, .5); font: 10px/14px "Liberation Mono", "Noto Sans CJK SC", monospace; color: #000; }
.wtitle { display: flex; align-items: center; padding: 0 0 2px 7px; gap: 6px; height: 29px; flex: none; background: #fff; color: #8a8a8a; font: 12px/16px "Noto Sans", sans-serif; }
.customize { left: 41px; top: 143px; width: 1393px; height: 667px; }
.panes { flex: 1; display: flex; gap: 4px; min-height: 0; }
.leftpane { width: 357px; display: flex; flex-direction: column; }
.filerow { display: flex; align-items: center; height: 37px; padding: 0 10px 8px 1px; gap: 2px; white-space: nowrap; }
.combo.flat { flex: 1; height: 20px; }
.combo.flat select { border-color: #777; color: #000; }
.ctree { flex: 1; border: 1px solid #828790; border-left: 0; background: #fff; }
.ctree > ul { padding-left: 5px; }
.ctree li { display: flex; flex-wrap: wrap; align-items: center; line-height: 16px; white-space: nowrap; }
.ctree li ul { width: 100%; padding-left: 19px; }
.ctree .leaf { padding-left: 4px; }
.leaf > .dash { width: 10px; margin-right: 1px; }
.leaf > .i14 { margin-right: 6px; }
.dash.short { width: 6px; }
.ibar { margin-right: 4px; }
.cmdlist { width: 487px; display: flex; background: #fff; border: 1px solid #828790; }
.viewport { flex: 1; overflow: hidden; }
.cmdlist table { table-layout: fixed; border-collapse: collapse; width: 470px; margin-top: -7px; }
.c1 { width: 149px; }
.c2 { width: 100px; }
.cmdlist thead { position: relative; top: 7px; z-index: 1; }
.cmdlist th { height: 21px; padding: 0 4px; text-align: left; font-weight: normal; background: linear-gradient(#fff, #f0f0f1); border-right: 1px solid #bbb; border-bottom: 1px solid #bbb; }
.cmdlist td { height: 18px; padding: 0 4px; white-space: nowrap; }
.cmdlist td:first-child { padding-left: 20px; }
.cmdlist td:nth-child(3) { padding-left: 1px; }
.cmdlist .zh { font-size: 12px; line-height: 14px; }
.cmdlist td svg { width: 16px; height: 16px; vertical-align: middle; margin: 0 3px 0 0; }
.cmdlist .vscroll { align-items: center; justify-content: flex-start; color: #555; }
.vscroll .vthumb { width: 15px; height: 268px; background: #cdcdcd; margin: 4px 0 auto; }
.props { flex: 1; background: #fff; border: 1px solid #828790; border-right: 0; }
.props table { width: 100%; border-collapse: collapse; table-layout: fixed; }
.props td, .props th { height: 17px; padding: 0 3px; font-weight: normal; text-align: left; border: 1px solid #c8c8c8; line-height: 14px; white-space: nowrap; }
.props th { width: 244px; padding: 0 2px; }
.props .gut { width: 14px; background: #c8c8c8; padding: 0 2px; }
.props .gut svg { display: block; }
.props .sel th { background: #c8c8c8; }
.props .strong { font-weight: bold; font-size: 12px; }
.props .iconcell { padding: 0 1px; }
.noimg { display: inline-block; width: 20px; height: 13px; border: 1px solid #222; margin-right: 7px; vertical-align: middle; }
.actions { display: flex; gap: 48px; height: 56px; padding: 20px 0 0 497px; flex: none; }
.push { width: 100px; height: 26px; background: #e1e0e2; border: 1px solid #adadad; }

.command { left: 900px; top: 384px; width: 454px; height: 160px; border-color: #5d5a5a; }
.command .wtitle { height: 30px; background: #5d5a5a; color: #f0f0f0; padding-left: 8px; font-size: 13px; }
.cbody { display: flex; gap: 22px; padding: 9px 2px 0 10px; }
fieldset { margin: 0; flex: 1; min-width: 0; height: 73px; border: 1px solid #dcdcdf; padding: 20px 0 0 30px; display: flex; align-items: flex-start; }
legend { margin-left: -25px; padding: 0 1px; }
fieldset label { display: flex; align-items: center; width: 153px; gap: 3px; }
input[type="radio"] { appearance: none; width: 13px; height: 13px; border: 1px solid #333; border-radius: 50%; background: #fff; }
input[type="radio"]:checked { background: radial-gradient(circle, #222 0 3px, #fff 4px); }
.cbuttons { display: flex; flex-direction: column; gap: 11px; padding-top: 11px; }
.cbuttons .push { width: 81px; }
.push.default { border: 2px solid #2173ae; box-shadow: inset 0 0 0 1px #b9e0f5; }
.macro { display: flex; align-items: center; padding: 9px 1px 0 21px; }
.macro label { width: 71px; }
.macro input { flex: 1; min-width: 0; height: 22px; border: 1px solid #3d5f78; padding: 0; background: #fff; }
.size { position: absolute; right: 1px; bottom: 1px; width: 10px; height: 10px; }

.pointer { position: absolute; left: 1010px; top: 470px; width: 80px; height: 60px; }
.badge { position: absolute; right: 153px; top: 3px; width: 213px; height: 43px; border: 2px solid #000; border-radius: 6px; background: linear-gradient(#626366, #3d3a3d); box-shadow: 3px 4px 3px rgba(60, 70, 100, .5); color: #fff; text-align: center; font: 22px/40px "Liberation Serif", serif; }
.badge b { font-family: "Open Sans", "Noto Sans CJK SC", sans-serif; }
.ime { position: absolute; right: 1px; top: 740px; width: 269px; height: 44px; display: flex; align-items: center; justify-content: space-between; padding: 0 9px 0 11px; border: 2px solid #b9cadb; border-radius: 4px; background: linear-gradient(#fbfdff, #e9e9ec); box-shadow: inset 0 0 0 1px #7fa3bd; }
.ime svg { width: 22px; height: 22px; }
.mark { position: absolute; left: 36px; bottom: 0; height: 60px; display: flex; gap: 20px; color: rgba(240, 240, 246, .85); overflow: hidden; }
.author { font: 34px/72px "Noto Sans CJK SC", sans-serif; }
.site { font: 900 54px/66px Lato, sans-serif; }
.credit { position: absolute; right: 9px; bottom: 6px; line-height: 20px; color: #f2f21c; text-shadow: 1px 1px #222; }
.credit-back { position: absolute; right: 4px; bottom: 2px; line-height: 20px; color: #5b9cf2; }
```
